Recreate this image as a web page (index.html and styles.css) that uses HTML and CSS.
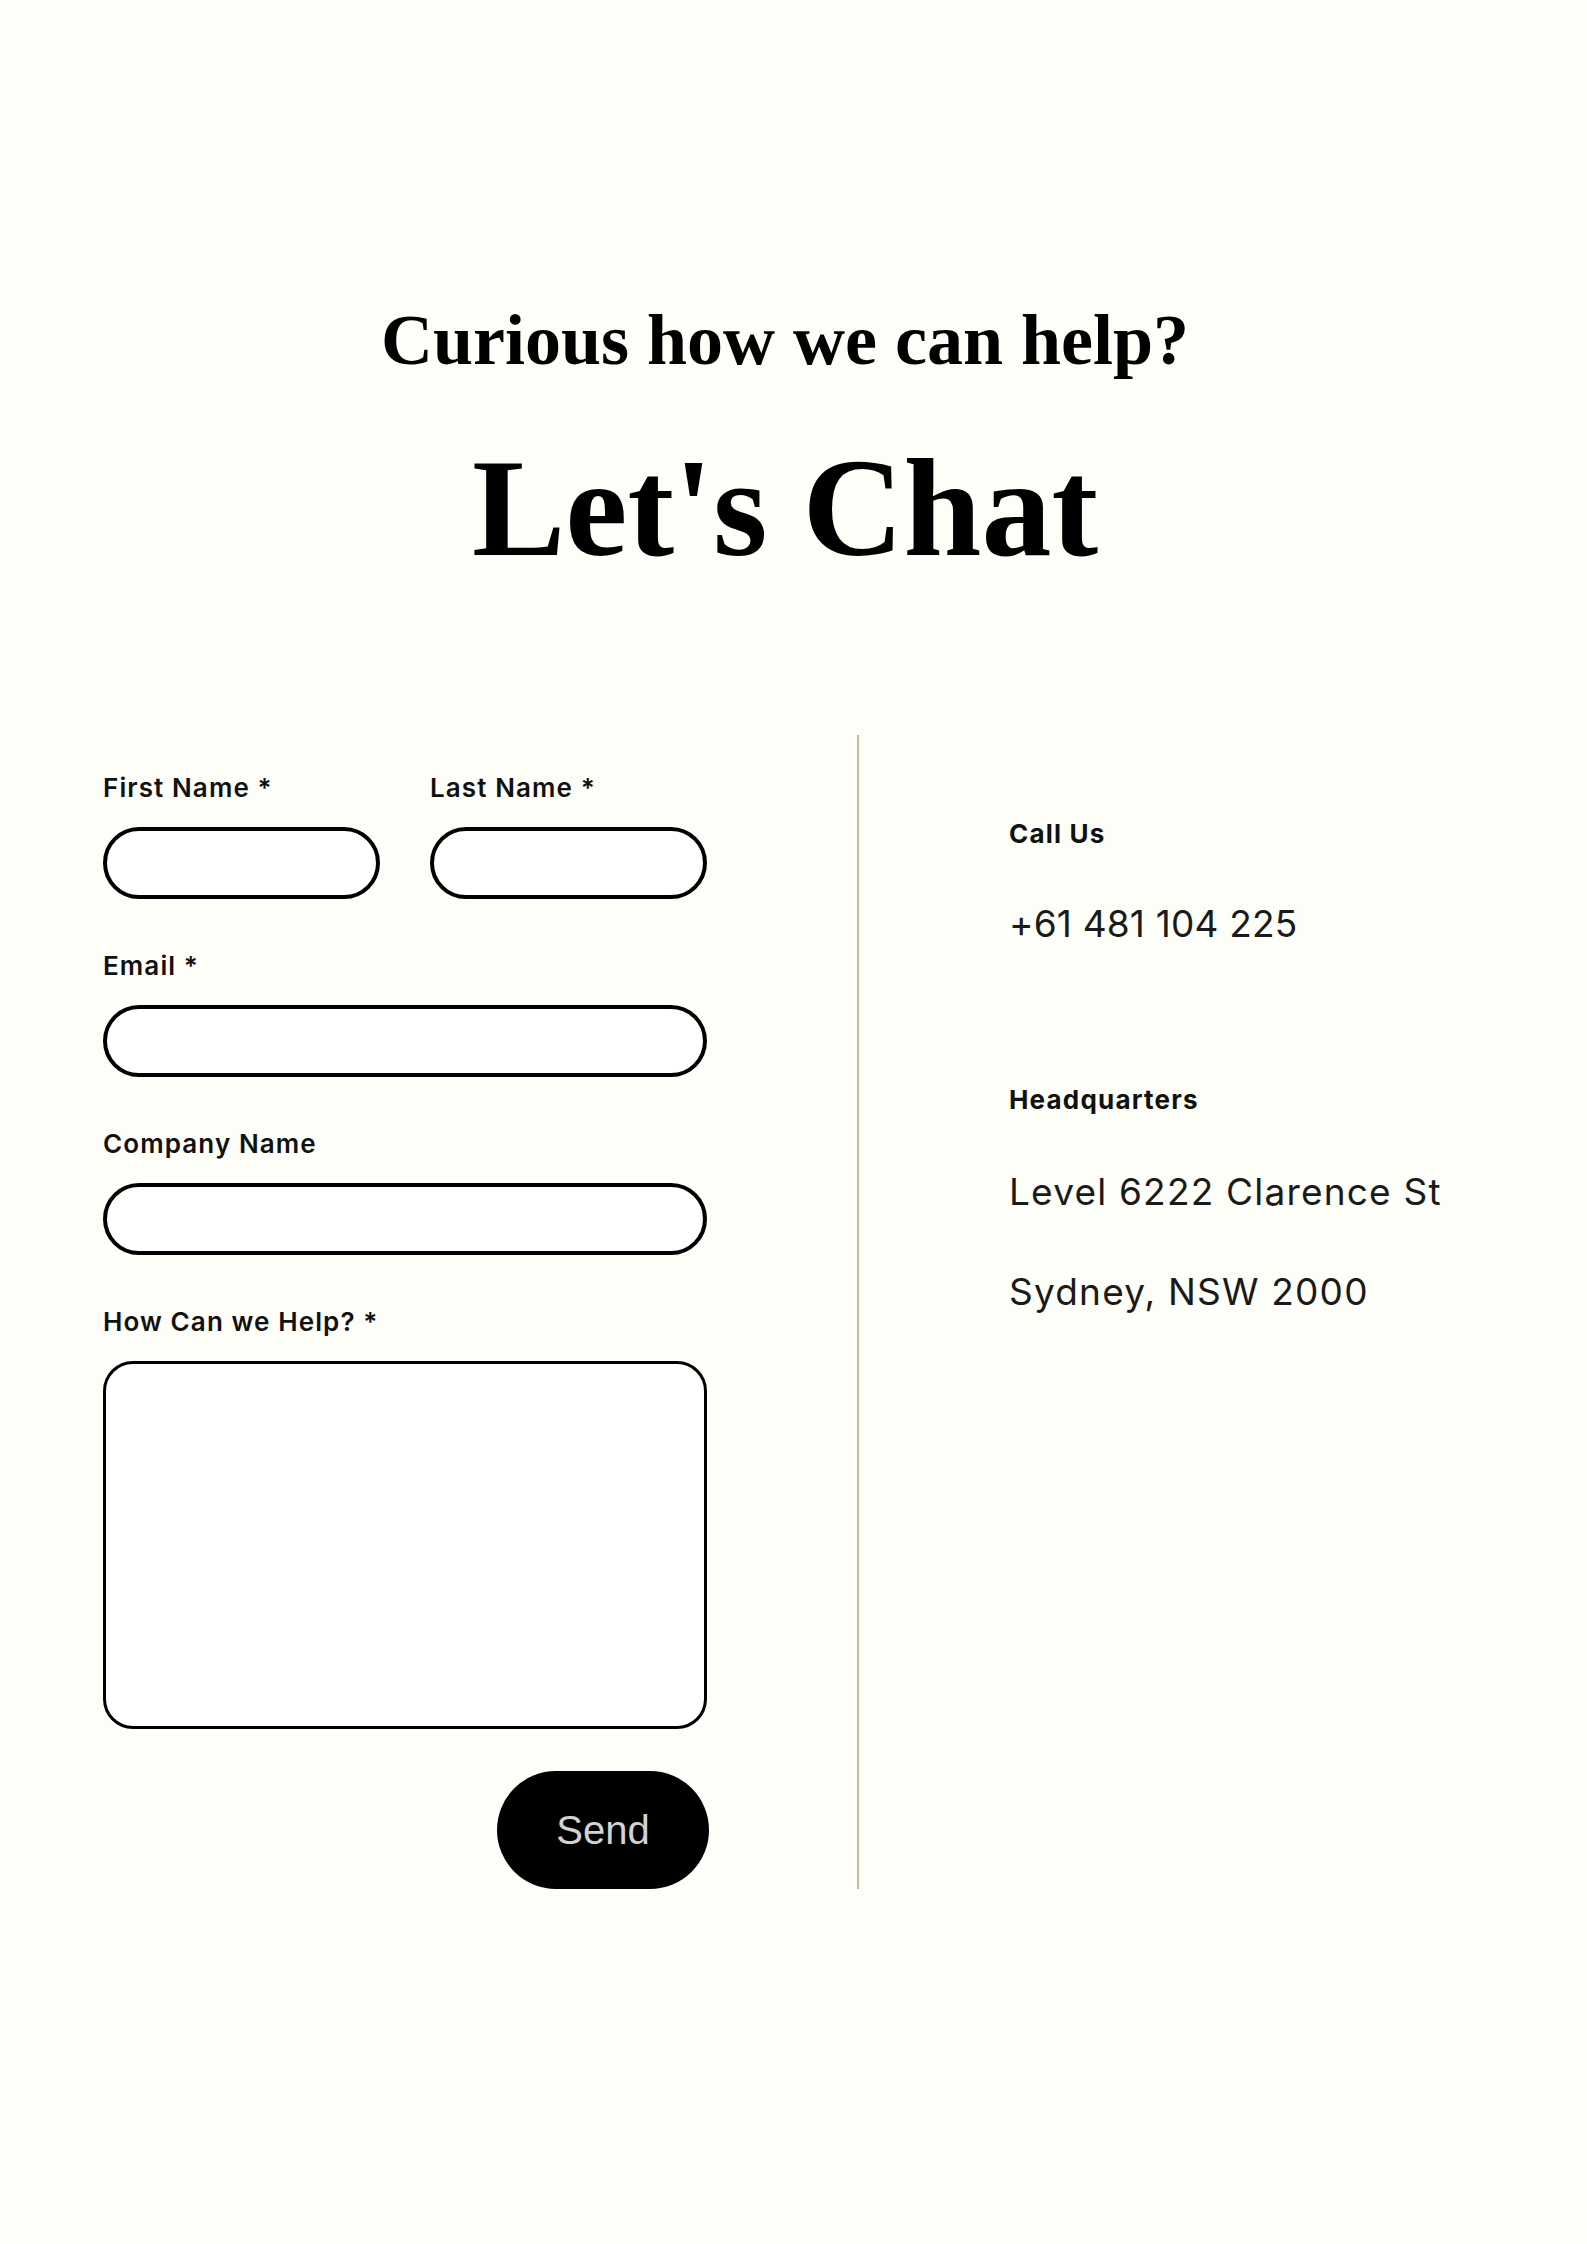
FILE: index.html
```html
<!DOCTYPE html>
<html lang="en">
<head>
<meta charset="utf-8">
<title>Let's Chat</title>
<link rel="stylesheet" href="styles.css">
</head>
<body>
<main class="page">
  <header class="intro">
    <p class="intro-kicker">Curious how we can help?</p>
    <h1 class="intro-title">Let's Chat</h1>
  </header>

  <section class="contact">
    <form class="form-col">
      <div class="row-2">
        <div class="field">
          <label class="label">First Name *</label>
          <input class="input" type="text">
        </div>
        <div class="field">
          <label class="label">Last Name *</label>
          <input class="input" type="text">
        </div>
      </div>
      <div class="field">
        <label class="label">Email *</label>
        <input class="input" type="email">
      </div>
      <div class="field">
        <label class="label">Company Name</label>
        <input class="input" type="text">
      </div>
      <div class="field">
        <label class="label">How Can we Help? *</label>
        <textarea class="textarea"></textarea>
      </div>
      <div class="actions">
        <button class="send" type="button">Send</button>
      </div>
    </form>

    <div class="divider"></div>

    <aside class="info-col">
      <div class="info-group">
        <h3 class="info-title">Call Us</h3>
        <p class="info-text info-phone">+61 481 104 225</p>
      </div>
      <div class="info-group info-group-hq">
        <h3 class="info-title">Headquarters</h3>
        <p class="info-text">Level 6222 Clarence St</p>
        <p class="info-text">Sydney, NSW 2000</p>
      </div>
    </aside>
  </section>
</main>
</body>
</html>
```

FILE: styles.css
```css
* {
  box-sizing: border-box;
}

html, body {
  margin: 0;
  padding: 0;
  background: #fdfef7;
}

body {
  font-family: "Inter", "Liberation Sans", sans-serif;
  color: #111;
}

.page {
  width: 1570px;
  min-height: 2244px;
}

.intro {
  text-align: center;
  padding-top: 304px;
}

.intro-kicker {
  margin: 0;
  font-family: "Liberation Serif", "Times New Roman", serif;
  font-weight: 700;
  font-size: 72px;
  line-height: 72px;
  color: #000;
}

.intro-title {
  margin: 62px 0 0;
  font-family: "Liberation Serif", "Times New Roman", serif;
  font-weight: 700;
  font-size: 140px;
  line-height: 140px;
  color: #000;
}

.contact {
  display: flex;
  margin-top: 157px;
}

.form-col {
  width: 604px;
  margin-left: 103px;
  padding-top: 38px;
  display: flex;
  flex-direction: column;
  gap: 52px;
}

.row-2 {
  display: grid;
  grid-template-columns: 1fr 1fr;
  gap: 50px;
}

.field {
  display: flex;
  flex-direction: column;
}

.label {
  font-family: "Inter", "Liberation Sans", sans-serif;
  font-weight: 600;
  font-size: 26px;
  line-height: 29px;
  letter-spacing: 1.1px;
  color: #111;
  margin-bottom: 25px;
}

.input {
  height: 72px;
  width: 100%;
  border: 4px solid #000;
  border-radius: 36px;
  background: #fff;
  padding: 0 24px;
  font: inherit;
}

.textarea {
  height: 368px;
  width: 100%;
  border: 3px solid #000;
  border-radius: 30px;
  background: #fff;
  resize: none;
  font: inherit;
}

.actions {
  display: flex;
  justify-content: flex-end;
  margin-top: -10px;
  margin-right: -2px;
}

.send {
  width: 212px;
  height: 118px;
  border: none;
  border-radius: 59px;
  background: #000;
  color: #d2d2d2;
  font-family: "Liberation Sans", Arial, sans-serif;
  font-size: 40px;
  padding: 0;
}

.divider {
  width: 2px;
  background: #cab89f;
  margin-left: 150px;
}

.info-col {
  padding-left: 150px;
  padding-top: 84px;
}

.info-title {
  margin: 0;
  font-family: "Inter", "Liberation Sans", sans-serif;
  font-weight: 700;
  font-size: 26px;
  line-height: 29px;
  letter-spacing: 1.2px;
  color: #111;
}

.info-text {
  margin: 56px 0 0;
  font-family: "Inter", "Liberation Sans", sans-serif;
  font-weight: 400;
  font-size: 37px;
  line-height: 44px;
  letter-spacing: 1.2px;
  color: #1a1a1a;
}

.info-phone {
  margin-top: 54px;
  letter-spacing: 0.2px;
}

.info-group-hq {
  margin-top: 139px;
}
```
